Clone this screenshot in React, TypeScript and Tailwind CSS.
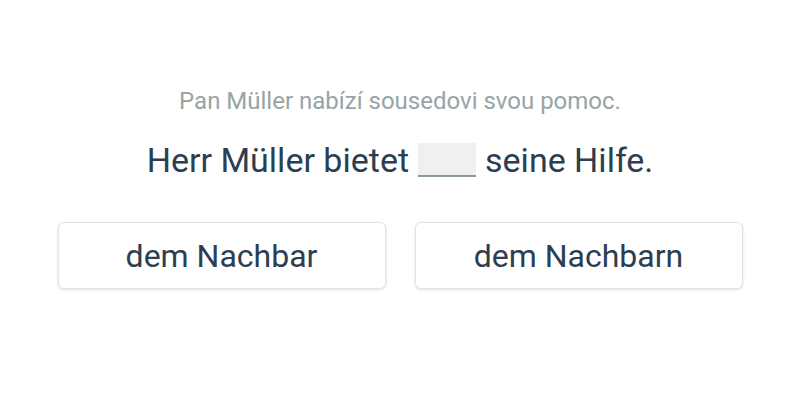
export default function App() {
  return (
    <div className="flex h-[400px] w-[800px] flex-col items-center bg-white font-['Roboto',sans-serif]">
      <p className="mt-[86px] text-[24px] leading-[30px] text-[#95a5a6]">
        Pan Müller nabízí sousedovi svou pomoc.
      </p>
      <p className="mt-[22px] flex items-center text-[34px] leading-[44px] text-[#2c3e50]">
        Herr Müller bietet
        <span className="mx-[9px] inline-block h-[34px] w-[58px] border-b-2 border-[#8a9a9b] bg-[#eef0f1]" />
        seine Hilfe.
      </p>
      <div className="mt-[40px] flex gap-[29px]">
        <button className="h-[67px] w-[328px] rounded-[6px] border border-[#dfe3e6] bg-white text-[32px] text-[#2c3e50] shadow-[0_1px_3px_rgba(0,0,0,0.12)]">
          dem Nachbar
        </button>
        <button className="h-[67px] w-[328px] rounded-[6px] border border-[#dfe3e6] bg-white text-[32px] text-[#2c3e50] shadow-[0_1px_3px_rgba(0,0,0,0.12)]">
          dem Nachbarn
        </button>
      </div>
    </div>
  );
}
